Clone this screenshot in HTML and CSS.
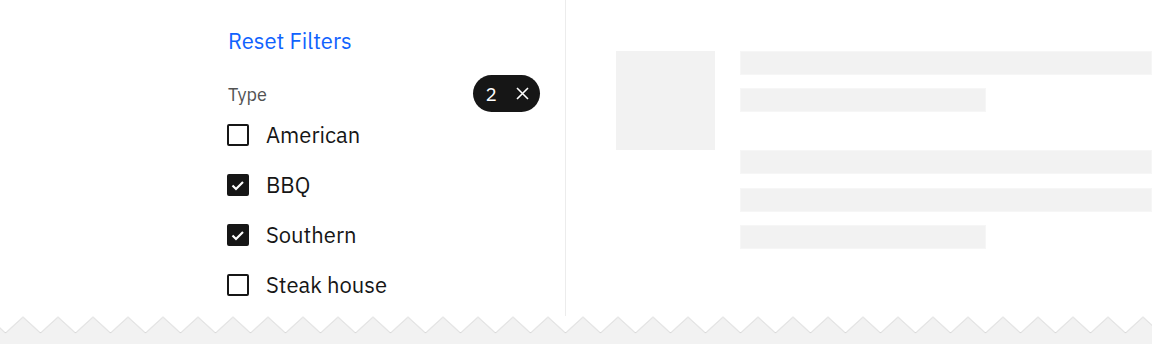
FILE: index.html
```html
<!DOCTYPE html>
<html lang="en">
<head>
<meta charset="utf-8">
<title>Filters</title>
<link rel="stylesheet" href="styles.css">
</head>
<body>
<div class="page">
  <div class="content">
    <aside class="filters">
      <a class="reset" href="#">Reset Filters</a>
      <div class="group-head">
        <span class="group-label">Type</span>
        <span class="tag">
          <span class="tag-count">2</span>
          <svg class="tag-close" width="13" height="13" viewBox="0 0 13 13" aria-hidden="true">
            <path d="M1 1L12 12M12 1L1 12" stroke="#fff" stroke-width="1.6" fill="none"/>
          </svg>
        </span>
      </div>
      <ul class="options">
        <li class="option"><span class="box"></span><span class="option-label">American</span></li>
        <li class="option"><span class="box checked"><svg width="22" height="22" viewBox="0 0 22 22" aria-hidden="true"><polyline points="5.5,11.5 9,15 16,8" fill="none" stroke="#fff" stroke-width="2.2"/></svg></span><span class="option-label">BBQ</span></li>
        <li class="option"><span class="box checked"><svg width="22" height="22" viewBox="0 0 22 22" aria-hidden="true"><polyline points="5.5,11.5 9,15 16,8" fill="none" stroke="#fff" stroke-width="2.2"/></svg></span><span class="option-label">Southern</span></li>
        <li class="option"><span class="box"></span><span class="option-label">Steak house</span></li>
      </ul>
    </aside>
    <main class="results">
      <div class="card">
        <div class="thumb"></div>
        <div class="lines title-lines">
          <div class="bar"></div>
          <div class="bar short"></div>
        </div>
        <div class="lines desc-lines">
          <div class="bar"></div>
          <div class="bar"></div>
          <div class="bar short"></div>
        </div>
      </div>
    </main>
  </div>
  <svg class="torn" width="1152" height="28" viewBox="0 0 1152 28" aria-hidden="true">
    <defs>
      <pattern id="zig" x="5.5" y="0" width="35" height="28" patternUnits="userSpaceOnUse">
        <polygon points="0,17 17.5,1 35,17 35,28 0,28" fill="#f2f2f2"/>
        <polyline points="-0.5,17.5 17.5,1 35.5,17.5" fill="none" stroke="#d6d6d6" stroke-width="1"/>
      </pattern>
    </defs>
    <rect x="0" y="0" width="1152" height="28" fill="url(#zig)"/>
  </svg>
</div>
</body>
</html>
```

FILE: styles.css
```css
* { box-sizing: border-box; }
html, body { margin: 0; padding: 0; background: #fff; }
body {
  width: 1152px;
  height: 344px;
  overflow: hidden;
  font-family: "IBM Plex Sans", "Liberation Sans", Arial, sans-serif;
  color: #161616;
}
.page { display: flex; flex-direction: column; height: 344px; }
.content { display: flex; height: 316px; }
.filters {
  width: 566px;
  flex: none;
  border-right: 1px solid #ececec;
  padding: 27px 25px 0 229px;
  display: flex;
  flex-direction: column;
}
.reset {
  font-size: 22px;
  line-height: 28px;
  color: #0f62fe;
  text-decoration: none;
  align-self: flex-start;
  margin-left: -1px;
}
.group-head {
  margin-top: 20px;
  height: 37px;
  display: flex;
  align-items: center;
  justify-content: space-between;
}
.group-label {
  font-size: 18px;
  line-height: 24px;
  color: #525252;
  padding-top: 3px;
  margin-left: -1px;
}
.tag {
  height: 37px;
  border-radius: 19px;
  background: #161616;
  color: #fff;
  display: inline-flex;
  align-items: center;
  padding: 0 11px 0 13px;
  gap: 19px;
}
.tag-count { font-size: 19px; line-height: 24px; }
.tag-close { display: block; }
.options {
  list-style: none;
  margin: 8px 0 0;
  padding: 0;
  display: flex;
  flex-direction: column;
  gap: 20px;
}
.option {
  height: 30px;
  display: flex;
  align-items: center;
  gap: 17px;
  margin-left: -2px;
}
.box {
  width: 22px;
  height: 22px;
  flex: none;
  border: 2px solid #161616;
  border-radius: 2px;
  position: relative;
}
.box.checked { background: #161616; }
.box svg { position: absolute; left: -2px; top: -2px; }
.option-label { font-size: 22px; line-height: 28px; }
.results {
  flex: 1;
  min-width: 0;
  overflow: hidden;
  padding: 51px 0 0 50px;
}
.card {
  display: grid;
  grid-template-columns: 99px 1fr;
  grid-template-rows: 99px auto;
  column-gap: 25px;
}
.thumb { background: #f2f2f2; grid-row: 1; grid-column: 1; }
.lines { display: flex; flex-direction: column; gap: 13px; }
.title-lines { grid-row: 1; grid-column: 2; }
.desc-lines { grid-row: 2; grid-column: 2; gap: 13.5px; }
.bar {
  height: 24px;
  background: #f2f2f2;
  border: 1px solid #f6f6f6;
}
.short { width: 246px; }
.torn { display: block; flex: none; }
```
